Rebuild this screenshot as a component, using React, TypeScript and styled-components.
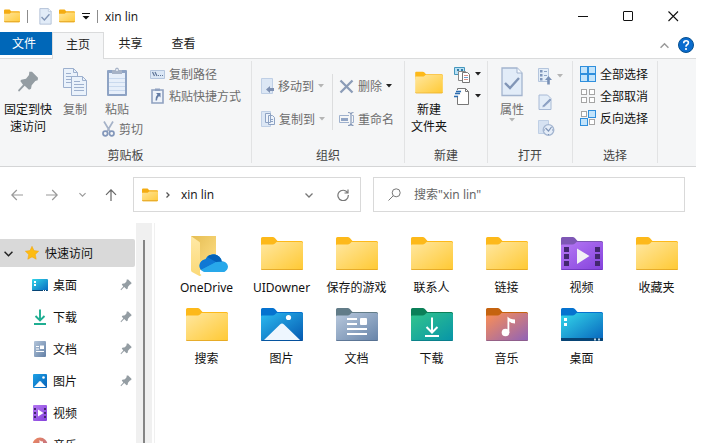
import React from 'react';
import styled, { createGlobalStyle } from 'styled-components';

const GlobalStyle = createGlobalStyle`
  * { box-sizing: border-box; }
  body {
    margin: 0;
    background: #fff;
    overflow: hidden;
  }
  body, button, input {
    font-family: 'Noto Sans', 'Noto Sans CJK SC', sans-serif;
    font-size: 12px;
    line-height: 17px;
    color: #111;
  }
  button {
    margin: 0;
    padding: 0;
    border: 0;
    background: transparent;
    text-align: center;
    white-space: nowrap;
  }
  svg { display: block; flex: none; }
`;

/* ---------- Window frame ---------- */

const Page = styled.div`
  height: 100vh;
  padding-right: 5px;
  background: #fff;
`;

const Window = styled.div`
  height: 100%;
  display: flex;
  flex-direction: column;
  overflow: hidden;
  background: #fff;
`;

const TitleBar = styled.header`
  flex: none;
  height: 32px;
  display: flex;
  align-items: center;
  padding-left: 4px;
`;

const TitleTools = styled.div`
  display: flex;
  align-items: center;
  gap: 7px;
`;

const TitleDivider = styled.span<{ $after?: number }>`
  width: 1px;
  height: 13px;
  margin-right: ${(p) => p.$after ?? 0}px;
  background: #8c8c8c;
`;

const WindowTitle = styled.h1`
  margin: 0;
  font-size: 12px;
  font-weight: 400;
  font-family: 'Open Sans', 'Noto Sans CJK SC', sans-serif;
`;

const WindowControls = styled.div`
  display: flex;
  margin-left: auto;
`;

const WindowButton = styled.button`
  width: 45px;
  height: 32px;
  display: grid;
  place-items: center;
`;

/* ---------- Ribbon ---------- */

const TabRow = styled.nav`
  flex: none;
  height: 27px;
  display: flex;
  align-items: flex-start;
  box-shadow: inset 0 -1px #dadbdc;
`;

const Tab = styled.button<{ $kind?: 'file' | 'active' }>`
  width: ${(p) => (p.$kind ? 52 : 53)}px;
  height: ${(p) => (p.$kind === 'active' ? 27 : 23)}px;
  padding-right: ${(p) => (p.$kind === 'file' ? 4 : 0)}px;
  padding-bottom: ${(p) => (p.$kind === 'active' ? 3 : 0)}px;
  color: ${(p) => (p.$kind === 'file' ? '#fff' : '#222')};
  background: ${(p) =>
    p.$kind === 'file' ? '#0067b8' : p.$kind === 'active' ? '#f5f6f7' : 'transparent'};
  border: ${(p) => (p.$kind === 'active' ? '1px solid #dadbdc' : '0')};
  border-bottom: 0;
`;

const TabRowEnd = styled.div`
  display: flex;
  align-items: center;
  gap: 9px;
  height: 26px;
  margin-left: auto;
  padding-right: 2px;
`;

const Ribbon = styled.section`
  flex: none;
  display: flex;
  height: 108px;
  padding: 2px 0 3px;
  background: #f5f6f7;
  border-bottom: 1px solid #d4d5d6;
`;

const RibbonGroup = styled.section<{ $width: number }>`
  flex: none;
  width: ${(p) => p.$width}px;
  display: flex;
  flex-direction: column;
  border-right: 1px solid #e2e3e4;
`;

const GroupBody = styled.div<{ $left: number; $gap?: number }>`
  flex: 1;
  display: flex;
  align-items: flex-start;
  gap: ${(p) => p.$gap ?? 0}px;
  padding: 2px 0 0 ${(p) => p.$left}px;
`;

const GroupName = styled.h2`
  margin: 0;
  font-size: 12px;
  line-height: 15px;
  font-weight: 400;
  text-align: center;
  color: #444;
`;

const LargeButton = styled.button<{ $width: number; $muted?: boolean }>`
  width: ${(p) => p.$width}px;
  display: flex;
  flex-direction: column;
  align-items: center;
  color: ${(p) => (p.$muted ? '#6d6d6d' : '#111')};
`;

const LargeIcon = styled.span`
  height: 38px;
  display: grid;
  place-items: center;
`;

const Column = styled.div<{ $top?: number; $gap?: number }>`
  display: flex;
  flex-direction: column;
  align-items: flex-start;
  gap: ${(p) => p.$gap ?? 0}px;
  padding-top: ${(p) => p.$top ?? 0}px;
`;

const SmallButton = styled.button<{ $muted?: boolean; $indent?: number }>`
  height: 22px;
  display: flex;
  align-items: center;
  gap: 4px;
  margin-left: ${(p) => p.$indent ?? 0}px;
  color: ${(p) => (p.$muted ? '#6d6d6d' : '#111')};
`;

const ColumnDivider = styled.span`
  width: 1px;
  height: 56px;
  margin: 11px 6px 0 7px;
  background: #dcddde;
`;

/* ---------- Navigation ---------- */

const NavBar = styled.nav`
  flex: none;
  height: 56px;
  display: flex;
  align-items: center;
  padding: 0 11px 1px 0;
`;

const NavButtons = styled.div`
  flex: none;
  width: 133px;
  display: flex;
  align-items: center;
  padding-left: 2px;
`;

const NavButton = styled.button<{ $width: number }>`
  width: ${(p) => p.$width}px;
  height: 28px;
  display: grid;
  place-items: center;
`;

const AddressBar = styled.div`
  flex: 228 1 228px;
  min-width: 0;
  height: 35px;
  display: flex;
  align-items: center;
  gap: 6px;
  padding: 0 3px 0 8px;
  border: 1px solid #d9d9d9;
`;

const Crumb = styled.button`
  flex: 1;
  padding-left: 3px;
  text-align: left;
  font-family: 'Open Sans', 'Noto Sans CJK SC', sans-serif;
`;

const AddressActions = styled.div`
  display: flex;
`;

const SearchBox = styled.label`
  flex: 312 1 312px;
  min-width: 0;
  height: 35px;
  display: flex;
  align-items: center;
  gap: 13px;
  margin-left: 12px;
  padding-left: 14px;
  border: 1px solid #d9d9d9;
`;

const SearchInput = styled.input`
  flex: 1;
  min-width: 0;
  padding: 0;
  border: 0;
  outline: 0;
  background: transparent;
  &::placeholder { color: #666; opacity: 1; }
`;

/* ---------- Body ---------- */

const Body = styled.div`
  flex: 1;
  min-height: 0;
  display: flex;
`;

const Sidebar = styled.aside`
  flex: none;
  width: 136px;
  padding: 16px 1px 0 0;
  overflow: hidden;
`;

const TreeHead = styled.button`
  width: 100%;
  height: 28px;
  display: flex;
  align-items: center;
  margin-bottom: 2px;
  padding-left: 4px;
  background: #d9d9d9;
  border-radius: 0 2px 2px 0;
`;

const TreeHeadIcon = styled.span`
  margin: 0 6px 0 12px;
`;

const TreeRow = styled.button`
  width: 100%;
  height: 32px;
  display: flex;
  align-items: center;
  gap: 5px;
  padding: 0 3px 0 32px;
`;

const TreeName = styled.span`
  flex: 1;
  text-align: left;
`;

const ScrollTrack = styled.div`
  flex: none;
  width: 16px;
  display: flex;
  justify-content: center;
  padding-top: 17px;
  background: #f0f0f0;
`;

const ScrollThumb = styled.div`
  width: 2px;
  background: #858585;
`;

const Files = styled.main`
  flex: 1;
  min-width: 0;
  display: grid;
  grid-template-columns: repeat(auto-fill, 75px);
  grid-auto-rows: 60px;
  align-content: start;
  row-gap: 11px;
  margin-left: 2px;
  padding: 13px 0 0 14px;
  border-left: 1px solid #f0f0f0;
`;

const FileItem = styled.button`
  display: flex;
  flex-direction: column;
  align-items: center;
`;

const FileIcon = styled.span`
  height: 43px;
`;

/* ---------- Icons ---------- */

const Caret = ({ color = '#222' }: { color?: string }) => (
  <svg width="6" height="4" viewBox="0 0 6 4"><path d="M0 0h6L3 3.5z" fill={color} /></svg>
);

const Pin = ({ size }: { size: number }) => (
  <svg width={size} height={size} viewBox="0 0 22 22">
    <path d="M12.3.7H15l6 6-.3 2.6-2.4.7-3.6 4.3-.7 3.4-2 1-4.3-4L2 20.7l-1-1.4 5-5.6L3.3 10l1-1.3 4.7-1L12 4z" fill="#949da3" />
  </svg>
);

const Chevron = ({ dir, color = '#777', size = 8 }: { dir: 'up' | 'down' | 'right'; color?: string; size?: number }) => (
  <svg width={size} height={size} viewBox="0 0 8 8" fill="none" stroke={color} strokeWidth="1.3">
    <path d={{ up: 'M.5 6 4 2.5 7.5 6', down: 'M.5 2.5 4 6l3.5-3.5', right: 'M2.5 1.500 5 4 2.5 6.500' }[dir]} />
  </svg>
);

const MiniFolder = () => (
  <svg width="16" height="14" viewBox="0 0 16 14">
    <defs>
      <linearGradient id="mini" x1="0" y1="0" x2="1" y2="1"><stop stopColor="#ffe59a" /><stop offset="1" stopColor="#ffca3a" /></linearGradient>
    </defs>
    <path d="M0 1.5Q0 .5 1 .5h4.6l1.6 1.7H15q1 0 1 1V8H0z" fill="#f4ac12" />
    <path d="M0 4.8h5.6l1.6-1.3H16v8.7q0 1-1 1H1q-1 0-1-1z" fill="url(#mini)" />
    <path d="M0 12.3q.2.9 1 .9h14q.8 0 1-.9z" fill="#e3a320" />
  </svg>
);

const CheckedPage = ({ w, h }: { w: number; h: number }) => (
  <svg width={w} height={h} viewBox="0 0 22 30">
    <path d="M1 1h15l5 5v22.500H1z" fill="#e2ecf8" stroke="#a3b4ce" strokeWidth="1.3" />
    <path d="M16 1v5h5" fill="#f5f9fe" stroke="#a3b4ce" />
    <path d="m4 16 5 5 9-10" fill="none" stroke="#8195b6" strokeWidth="2.4" />
  </svg>
);

const CopyPages = () => (
  <svg width="26" height="30" viewBox="0 0 26 30" stroke="#9db0ce">
    <path d="M1.500 1.500h10l4 4v15h-14z" fill="#eaf2fb" />
    <path d="M11.500 1.500v4h4M4 6.500h5M4 9.500h8M4 12.500h8M4 15.500h8" fill="none" />
    <path d="M9.500 9.500h11l4 4v15h-15z" fill="#eaf2fb" />
    <path d="M20.500 9.500v4h4M12 14.500h6M12 17.500h10M12 20.500h10M12 23.500h10" fill="none" />
  </svg>
);

const Clipboard = () => (
  <svg width="22" height="30" viewBox="0 0 22 30">
    <rect x="1" y="3" width="20" height="26" rx="1" fill="#8ea3c4" />
    <path d="M3 6h16v21H3z" fill="#e7effa" />
    <path d="M3 11.500h16M3 15.500h16M3 19.500h16M3 23.500h16" stroke="#c9d9ee" />
    <path d="M6 3h3q0-2.500 2-2.500T13 3h3v4H6z" fill="#a7b3c7" />
    <circle cx="11" cy="3" r="1" fill="#eef3fa" />
  </svg>
);

const Scissors = () => (
  <svg width="13" height="16" viewBox="0 0 13 16" fill="none">
    <path d="m2 .5 6 10M11 .5l-6 10" stroke="#a5b2c8" strokeWidth="1.700" />
    <ellipse cx="3.300" cy="12.500" rx="2.300" ry="2.300" stroke="#8397ba" strokeWidth="1.700" />
    <ellipse cx="9.700" cy="12.500" rx="2.300" ry="2.300" stroke="#8397ba" strokeWidth="1.700" />
  </svg>
);

const PathIcon = () => (
  <svg width="15" height="16" viewBox="0 0 15 16">
    <path d="M.5 4.500h14v8H.5z" fill="#dbe7f5" stroke="#b4c5dd" />
    <path d="m2.500 6 2 4M5 6l2 4M8 9.500h1M10 9.500h1M12 9.500h1" stroke="#5f7598" strokeWidth="1.200" />
  </svg>
);

const ShortcutIcon = () => (
  <svg width="15" height="16" viewBox="0 0 15 16">
    <path d="M2 2h11v13H2z" fill="#eef3fa" stroke="#8fa1c0" strokeWidth="1.600" />
    <path d="M5 .5h5V3H5z" fill="#8fa1c0" />
    <path d="M6 5h4.500v4.500L9 8q-2 1.500-2 4.500H5.500Q5 9 7.500 6.500z" fill="#647ca4" />
  </svg>
);

const MoveIcon = () => (
  <svg width="13" height="16" viewBox="0 0 13 16">
    <path d="M.5.500h11v15H.5z" fill="#dce7f5" stroke="#bfcfe5" />
    <path d="M5 11.500 9 8v2h4v3H9v2z" fill="#7d90b2" />
  </svg>
);

const CopyToIcon = () => (
  <svg width="14" height="16" viewBox="0 0 14 16">
    <path d="M.5.500h9v15h-9z" fill="#dce7f5" stroke="#bfcfe5" />
    <path d="M4.500 2.500h5v9h-5zM7.500 4.500h4l2 2v7h-6z" fill="#edf3fb" stroke="#8da2c3" />
    <path d="M9 8.500h3M9 10.500h3" stroke="#8da2c3" />
  </svg>
);

const DeleteIcon = () => (
  <svg width="15" height="15" viewBox="0 0 15 15"><path d="m1.500 1.500 12 12M13.500 1.500l-12 12" stroke="#8b9cb7" strokeWidth="2.300" /></svg>
);

const RenameIcon = () => (
  <svg width="15" height="16" viewBox="0 0 15 16" fill="none">
    <path d="M10 4.500H.5v7H10M13 4.500h1.500v7H13" stroke="#9fb1cd" />
    <path d="M2 7h7v3H2z" fill="#91a5c5" />
    <path d="M9 1.500q3 0 3 2 0-2 2.500-2M9 14.500q3 0 3-2 0 2 2.500 2M12 3v10" stroke="#8598b8" strokeWidth="1.200" />
  </svg>
);

const NewItemIcon = () => (
  <svg width="17" height="17" viewBox="0 0 17 17">
    <path d="M.5 1.500h10v7H.5z" fill="#b9e1f5" stroke="#4597bd" />
    <path d="M3 3h2v2H3zM7 3h2v2H7z" fill="#347ba5" />
    <path d="M4.500 5.500h7v9h-7z" fill="#fff" stroke="#888" />
    <path d="M8.500 6.500h5l2 2v8h-7z" fill="#fff" stroke="#777" />
    <path d="M10 9.500h4M10 13.500h4" stroke="#d78d86" /><path d="M10 11.500h4" stroke="#6d9ccb" />
  </svg>
);

const EasyAccessIcon = () => (
  <svg width="17" height="17" viewBox="0 0 17 17">
    <path d="M3.500.500h8l3 3v13h-11z" fill="#fff" stroke="#777" />
    <path d="M11.500.500v3h3" fill="none" stroke="#777" />
    <path d="M1.500 3.500h6M.5 5.500h6M0 7.500h5" stroke="#f5f6f7" strokeWidth="3" />
    <path d="M2 3.500h5M1 5.500h5M0 8.500h4" stroke="#2b6cb0" strokeWidth="1.300" />
  </svg>
);

const OpenIcon = () => (
  <svg width="15" height="17" viewBox="0 0 15 17">
    <path d="M.5.500h10v13H.5z" fill="#e3edf8" stroke="#b4c5dd" />
    <path d="M2 2h2.500v2.500H2zM2 6h2.500v2.500H2zM2 10h2.500v2.500H2z" fill="#7f96ba" />
    <path d="M6 3.500h3M6 7.500h3" stroke="#8ea4c5" />
    <path d="M10.500 8 14 12h-2.200v4.500H9.200V12H7z" fill="#7890b5" />
  </svg>
);

const EditIcon = () => (
  <svg width="15" height="17" viewBox="0 0 15 17">
    <path d="M1 1h8.500L13 4.500v11H1z" fill="#e3edf8" stroke="#a8bad5" />
    <path d="m4 13.500.5-2L12 4l2 2-7.500 7z" fill="#8da2c4" stroke="#eef4fb" strokeWidth=".5" />
  </svg>
);

const HistoryIcon = () => (
  <svg width="17" height="16" viewBox="0 0 17 16">
    <path d="M.5.500h10v13h-10z" fill="#d6e2f2" stroke="#bfcfe5" />
    <circle cx="10.500" cy="10" r="5.300" fill="#e5edf8" stroke="#a3b5d0" strokeWidth="1.300" />
    <path d="m7.500 8 3 3 3-4M6 10h1M14 10h1M10.500 14v1" fill="none" stroke="#7f95b8" strokeWidth="1.200" />
  </svg>
);

const SelectIcon = ({ on }: { on: boolean[] }) => (
  <svg width="16" height="16" viewBox="0 0 16 16">
    {[0, 1, 2, 3].map((i) => (
      <rect
        key={i}
        x={(i % 2) * 8 + (on[i] ? 0.5 : 1.5)}
        y={Math.floor(i / 2) * 8 + (on[i] ? 0.5 : 1.5)}
        width={on[i] ? 7 : 5}
        height={on[i] ? 7 : 5}
        fill={on[i] ? '#c3e4fb' : '#fff'}
        stroke={on[i] ? '#2f8fdd' : '#a5a5a5'}
      />
    ))}
  </svg>
);

type Kind = 'plain' | 'pictures' | 'documents' | 'downloads' | 'music' | 'videos' | 'desktop';

const folderColors: Record<Kind, [string, string, string, string]> = {
  plain: ['#fdb91a', '#ffe7a0', '#ffc933', '#e0a01c'],
  pictures: ['#0572cf', '#2cbaf0', '#0458b0', '#034a94'],
  documents: ['#627c88', '#b9c9dd', '#6683a8', '#526b8b'],
  downloads: ['#0b8058', '#32c58c', '#0794a8', '#087784'],
  music: ['#c5630f', '#fd9053', '#8e62b9', '#8a5b83'],
  videos: ['#7e57b5', '#b77af5', '#8341dc', '#6a31b6'],
  desktop: ['#0572cf', '#35d8ea', '#0663bd', '#073e68'],
};

const folderArt: Record<Kind, React.ReactNode> = {
  plain: null,
  pictures: (
    <>
      <path d="M3 32 19 16.500q2-2 4 0L39 32z" fill="#eef6fe" />
      <circle cx="27.500" cy="9.500" r="2.600" fill="#fff" />
    </>
  ),
  documents: (
    <>
      <path d="M11 11h10M11 16h10M11 21h20M11 26h20" stroke="#fff" strokeWidth="2" />
      <rect x="24" y="10" width="7" height="7" rx="1" fill="#fff" />
    </>
  ),
  downloads: (
    <path d="M21 9.500v15M15.500 19l5.500 5.500 5.500-5.500M14 28h14" fill="none" stroke="#fff" strokeWidth="2" />
  ),
  music: (
    <>
      <circle cx="19.500" cy="24.500" r="3.800" fill="#fff" />
      <path d="M21.500 25V8.500q1.500 2.500 7.500 3v4q-4 0-5.700-2V25z" fill="#fff" />
    </>
  ),
  videos: (
    <>
      <path d="M16 11.500 28.500 19 16 27z" fill="#f2f0f5" />
      <path d="M3 10h5v5H3zM3 17h5v5H3zM3 24h5v5H3zM34 10h5v5h-5zM34 17h5v5h-5zM34 24h5v5h-5z" fill="#43276f" />
    </>
  ),
  desktop: (
    <>
      <path d="M0 30h42v1.500q0 1.500-1.500 1.500h-39Q0 33 0 31.500z" fill="#074475" />
      <path d="M3 10h3v3H3zM3 15h3v3H3z" fill="#fff" />
      <path d="M33 30.500h2v2h-2zM37 30.500h2v2h-2z" fill="#bdd5e8" />
    </>
  ),
};

const Folder = ({ kind = 'plain', width = 42, height = 35 }: { kind?: Kind; width?: number; height?: number }) => {
  const [tab, from, to, edge] = folderColors[kind];
  const id = `folder-${kind}`;
  return (
    <svg width={width} height={height} viewBox="0 -1 42 35">
      <defs>
        <linearGradient id={id} x1="0" y1="0" x2="1" y2="1">
          <stop stopColor={from} /><stop offset="1" stopColor={to} />
        </linearGradient>
      </defs>
      <path d="M0 1.500Q0 0 1.500 0h10q1.500 0 2.600 1.200L16.500 4h24Q42 4 42 5.500V12H0z" fill={tab} />
      <path d="M0 8.500Q0 7.500 1 7.500h10.500q1.500 0 2.500-1L15.500 5h25Q42 5 42 6.500v25q0 1.500-1.500 1.500h-39Q0 33 0 31.500z" fill={`url(#${id})`} />
      <path d="M0 31.500Q0 33 1.500 33h39q1.500 0 1.500-1.500-.5.700-1.500.700h-39Q.5 32.200 0 31.500z" fill={edge} />
      {folderArt[kind]}
    </svg>
  );
};

const OneDriveIcon = () => (
  <svg width="44" height="42" viewBox="-6 0 44 42">
    <defs>
      <linearGradient id="od-back" x1="0" y1="0" x2="1" y2="1"><stop stopColor="#e5bd53" /><stop offset="1" stopColor="#ffe087" /></linearGradient>
      <linearGradient id="od-front" x1="0" y1="0" x2="0" y2="1"><stop stopColor="#ffe9a6" /><stop offset="1" stopColor="#fbd978" /></linearGradient>
      <clipPath id="od-cloud"><path d="M14 36a6 6 0 0 1-5.500-6 6.500 6.500 0 0 1 6-6.800 8.700 8.700 0 0 1 16.300 2.300A5.300 5.300 0 0 1 32.500 36z" /></clipPath>
    </defs>
    <path d="M0 0h25v34H0z" fill="url(#od-back)" />
    <path d="M0 0 8.500 6q.5.400.5 1v31l1.500 1q-1.500 1.500-3 .5L1 36q-1-.6-1-2z" fill="url(#od-front)" />
    <g clipPath="url(#od-cloud)">
      <path d="M7 15h32v22H7z" fill="#28a8ea" />
      <path d="M7 15h18l1 11-18 9z" fill="#0f78d4" />
      <path d="M14.500 20V15h18v10.500l-7.500.500z" fill="#0462b8" />
      <path d="M8 35 25 26l9 8v3H8z" fill="#28a8ea" />
    </g>
  </svg>
);

const Frame16 = ({ children }: { children: React.ReactNode }) => (
  <svg width="16" height="16" viewBox="0 0 16 16">{children}</svg>
);

const Gradient = ({ id, from, to }: { id: string; from: string; to: string }) => (
  <defs>
    <linearGradient id={id} x1="0" y1="0" x2="1" y2="1"><stop stopColor={from} /><stop offset="1" stopColor={to} /></linearGradient>
  </defs>
);

const SideDesktop = () => (
  <Frame16>
    <Gradient id="s-desk" from="#31d6e8" to="#0767c0" />
    <rect y="2" width="16" height="12" rx="1" fill="url(#s-desk)" />
    <path d="M0 13h16q0 1-1 1H1q-1 0-1-1z" fill="#074475" />
    <path d="M2 4h2v2H2zM2 7h2v2H2zM11 13h1v1h-1zM13 13h1v1h-1z" fill="#fff" />
  </Frame16>
);

const SideDownload = () => (
  <Frame16>
    <path d="M8 .5v10.500M3.500 7 8 11.500 12.500 7M2 15h12" fill="none" stroke="#1fae92" strokeWidth="1.900" />
  </Frame16>
);

const SideDocument = () => (
  <Frame16>
    <Gradient id="s-doc" from="#b3c5da" to="#627fa5" />
    <rect x="2" width="12" height="16" rx="1" fill="url(#s-doc)" />
    <path d="M4 5.500h3M4 8h3M4 10.500h8" stroke="#fff" strokeWidth="1.200" />
    <path d="M8 4.500h4V8H8z" fill="#fff" />
  </Frame16>
);

const SidePicture = () => (
  <Frame16>
    <Gradient id="s-pic" from="#1ea2e6" to="#0560b8" />
    <rect x="1" y="1" width="14" height="14" rx="1" fill="url(#s-pic)" />
    <path d="m2 14 5.200-5.500q.8-.8 1.600 0L14 14z" fill="#fff" />
    <circle cx="11.500" cy="4.500" r="1.300" fill="#fff" />
  </Frame16>
);

const SideVideo = () => (
  <Frame16>
    <Gradient id="s-vid" from="#b578f2" to="#8340da" />
    <rect x="1" width="14" height="16" rx="1" fill="url(#s-vid)" />
    <path d="M2 3h2v2H2zM2 7h2v2H2zM2 11h2v2H2zM12 3h2v2h-2zM12 7h2v2h-2zM12 11h2v2h-2z" fill="#43276f" />
    <path d="M6 4.500 11.500 8 6 11.500z" fill="#fff" />
  </Frame16>
);

const SideMusic = () => (
  <Frame16>
    <Gradient id="s-mus" from="#f18a5b" to="#b0668f" />
    <circle cx="8" cy="8" r="7.500" fill="url(#s-mus)" />
    <path d="M7.500 10.500V3q1 1.500 3.500 1.500v2q-1.500 0-2.300-.8v5z" fill="#fff" />
    <circle cx="6.800" cy="10.700" r="2" fill="#fff" />
  </Frame16>
);

const Star = () => (
  <svg width="14" height="14" viewBox="0 0 14 14">
    <path d="m7 .3 2 4.300 4.700.6-3.400 3.200.9 4.800L7 10.900l-4.200 2.300.9-4.800L.3 5.200 5 4.600z" fill="#fdbc13" stroke="#f2a50c" strokeWidth=".5" />
  </svg>
);

const Arrow = ({ dir, color }: { dir: 'left' | 'right' | 'up'; color: string }) => (
  <svg width="12" height="12" viewBox="0 0 12 12" fill="none" stroke={color} strokeWidth="1.200">
    <path d={{ left: 'M12 6H.8M5.800 1l-5 5 5 5', right: 'M0 6h11.200M6.200 1l5 5-5 5', up: 'M6 12V.8M1 5.800l5-5 5 5' }[dir]} />
  </svg>
);

/* ---------- Content ---------- */

const treeItems: { name: string; icon: React.ReactNode; pinned: boolean }[] = [
  { name: '桌面', icon: <SideDesktop />, pinned: true },
  { name: '下载', icon: <SideDownload />, pinned: true },
  { name: '文档', icon: <SideDocument />, pinned: true },
  { name: '图片', icon: <SidePicture />, pinned: true },
  { name: '视频', icon: <SideVideo />, pinned: false },
  { name: '音乐', icon: <SideMusic />, pinned: false },
];

const files: { name: string; kind: Kind | 'onedrive' }[] = [
  { name: 'OneDrive', kind: 'onedrive' },
  { name: 'UIDowner', kind: 'plain' },
  { name: '保存的游戏', kind: 'plain' },
  { name: '联系人', kind: 'plain' },
  { name: '链接', kind: 'plain' },
  { name: '视频', kind: 'videos' },
  { name: '收藏夹', kind: 'plain' },
  { name: '搜索', kind: 'plain' },
  { name: '图片', kind: 'pictures' },
  { name: '文档', kind: 'documents' },
  { name: '下载', kind: 'downloads' },
  { name: '音乐', kind: 'music' },
  { name: '桌面', kind: 'desktop' },
];

const faded = '#b5b5b5';

export default function App() {
  return (
    <Page>
      <GlobalStyle />
      <Window>
        <TitleBar>
          <TitleTools>
            <MiniFolder />
            <TitleDivider $after={4} />
            <button aria-label="属性"><CheckedPage w={13} h={17} /></button>
            <button aria-label="新建文件夹"><MiniFolder /></button>
            <button aria-label="自定义快速访问工具栏">
              <svg width="8" height="7" viewBox="0 0 8 7"><path d="M0 .5h8" stroke="#111" /><path d="M.5 3h7L4 6.500z" fill="#111" /></svg>
            </button>
            <TitleDivider />
            <WindowTitle>xin lin</WindowTitle>
          </TitleTools>
          <WindowControls>
            <WindowButton aria-label="最小化">
              <svg width="11" height="11" viewBox="0 0 11 11"><path d="M0 5.500h10" stroke="#111" /></svg>
            </WindowButton>
            <WindowButton aria-label="最大化">
              <svg width="11" height="11" viewBox="0 0 11 11"><rect x=".5" y=".5" width="9" height="9" rx=".5" fill="none" stroke="#111" /></svg>
            </WindowButton>
            <WindowButton aria-label="关闭">
              <svg width="11" height="11" viewBox="0 0 11 11"><path d="m.5.500 9.500 9.500M10 .5.500 10" stroke="#111" strokeWidth="1.100" /></svg>
            </WindowButton>
          </WindowControls>
        </TitleBar>

        <TabRow>
          <Tab $kind="file">文件</Tab>
          <Tab $kind="active">主页</Tab>
          <Tab>共享</Tab>
          <Tab>查看</Tab>
          <TabRowEnd>
            <button aria-label="折叠功能区"><Chevron dir="up" color="#999" size={9} /></button>
            <button aria-label="帮助">
              <svg width="16" height="16" viewBox="0 0 16 16">
                <circle cx="8" cy="8" r="7.500" fill="#0a6cce" stroke="#07508f" />
                <path d="M5.700 6.200q0-2.400 2.400-2.400 2.300 0 2.300 2 0 1.200-1.300 2Q8 8.500 8 9.700" fill="none" stroke="#fff" strokeWidth="1.600" />
                <circle cx="8" cy="12" r="1.100" fill="#fff" />
              </svg>
            </button>
          </TabRowEnd>
        </TabRow>

        <Ribbon>
          <RibbonGroup $width={252}>
            <GroupBody $left={2}>
              <LargeButton $width={52}>
                <LargeIcon><Pin size={22} /></LargeIcon>
                <span>固定到快</span>
                <span>速访问</span>
              </LargeButton>
              <LargeButton $width={42} $muted>
                <LargeIcon><CopyPages /></LargeIcon>
                <span>复制</span>
              </LargeButton>
              <Column>
                <LargeButton $width={42} $muted>
                  <LargeIcon><Clipboard /></LargeIcon>
                  <span>粘贴</span>
                </LargeButton>
                <SmallButton $muted $indent={6}><Scissors />剪切</SmallButton>
              </Column>
              <Column>
                <SmallButton $muted $indent={7}><PathIcon />复制路径</SmallButton>
                <SmallButton $muted $indent={7}><ShortcutIcon />粘贴快捷方式</SmallButton>
              </Column>
            </GroupBody>
            <GroupName>剪贴板</GroupName>
          </RibbonGroup>

          <RibbonGroup $width={153}>
            <GroupBody $left={9}>
              <Column $top={12} $gap={11}>
                <SmallButton $muted><MoveIcon />移动到<Caret color={faded} /></SmallButton>
                <SmallButton $muted><CopyToIcon />复制到<Caret color={faded} /></SmallButton>
              </Column>
              <ColumnDivider />
              <Column $top={12} $gap={11}>
                <SmallButton $muted><DeleteIcon />删除<Caret /></SmallButton>
                <SmallButton $muted><RenameIcon />重命名</SmallButton>
              </Column>
            </GroupBody>
            <GroupName>组织</GroupName>
          </RibbonGroup>

          <RibbonGroup $width={83}>
            <GroupBody $left={3} $gap={4}>
              <LargeButton $width={42}>
                <LargeIcon><Folder width={28} height={23} /></LargeIcon>
                <span>新建</span>
                <span>文件夹</span>
              </LargeButton>
              <Column>
                <SmallButton aria-label="新建项目"><NewItemIcon /><Caret /></SmallButton>
                <SmallButton aria-label="轻松访问"><EasyAccessIcon /><Caret /></SmallButton>
              </Column>
            </GroupBody>
            <GroupName>新建</GroupName>
          </RibbonGroup>

          <RibbonGroup $width={85}>
            <GroupBody $left={3} $gap={5}>
              <LargeButton $width={42} $muted>
                <LargeIcon><CheckedPage w={22} h={30} /></LargeIcon>
                <span>属性</span>
                <Caret color={faded} />
              </LargeButton>
              <Column $top={2} $gap={4}>
                <SmallButton aria-label="打开"><OpenIcon /><Caret color={faded} /></SmallButton>
                <SmallButton aria-label="编辑"><EditIcon /></SmallButton>
                <SmallButton aria-label="历史记录"><HistoryIcon /></SmallButton>
              </Column>
            </GroupBody>
            <GroupName>打开</GroupName>
          </RibbonGroup>

          <RibbonGroup $width={85}>
            <GroupBody $left={7}>
              <Column>
                <SmallButton><SelectIcon on={[true, true, true, true]} />全部选择</SmallButton>
                <SmallButton><SelectIcon on={[false, false, false, false]} />全部取消</SmallButton>
                <SmallButton><SelectIcon on={[false, true, true, false]} />反向选择</SmallButton>
              </Column>
            </GroupBody>
            <GroupName>选择</GroupName>
          </RibbonGroup>
        </Ribbon>

        <NavBar>
          <NavButtons>
            <NavButton $width={30} aria-label="后退"><Arrow dir="left" color="#999" /></NavButton>
            <NavButton $width={40} aria-label="前进"><Arrow dir="right" color="#999" /></NavButton>
            <NavButton $width={21} aria-label="最近浏览的位置"><Chevron dir="down" color="#999" size={7} /></NavButton>
            <NavButton $width={36} aria-label="上移"><Arrow dir="up" color="#666" /></NavButton>
          </NavButtons>
          <AddressBar>
            <MiniFolder />
            <Chevron dir="right" color="#555" />
            <Crumb>xin lin</Crumb>
            <AddressActions>
              <NavButton $width={40} aria-label="以前的位置"><Chevron dir="down" /></NavButton>
              <NavButton $width={28} aria-label="刷新">
                <svg width="12" height="12" viewBox="0 0 12 12" fill="none" stroke="#777" strokeWidth="1.200">
                  <path d="M10.600 3.800A5.200 5.200 0 1 0 11.300 6M11 .5V4H7.500" />
                </svg>
              </NavButton>
            </AddressActions>
          </AddressBar>
          <SearchBox>
            <svg width="13" height="13" viewBox="0 0 13 13" fill="none" stroke="#777" strokeWidth="1">
              <circle cx="8.200" cy="4.800" r="4" /><path d="M5.300 7.700.5 12.500" />
            </svg>
            <SearchInput type="search" aria-label="搜索" placeholder={'搜索"xin lin"'} />
          </SearchBox>
        </NavBar>

        <Body>
          <Sidebar>
            <TreeHead>
              <Chevron dir="down" color="#222" size={9} />
              <TreeHeadIcon><Star /></TreeHeadIcon>
              快速访问
            </TreeHead>
            {treeItems.map((item) => (
              <TreeRow key={item.name}>
                {item.icon}
                <TreeName>{item.name}</TreeName>
                {item.pinned && <Pin size={12} />}
              </TreeRow>
            ))}
          </Sidebar>
          <ScrollTrack><ScrollThumb /></ScrollTrack>
          <Files>
            {files.map((f) => (
              <FileItem key={f.name}>
                <FileIcon>{f.kind === 'onedrive' ? <OneDriveIcon /> : <Folder kind={f.kind} />}</FileIcon>
                {f.name}
              </FileItem>
            ))}
          </Files>
        </Body>
      </Window>
    </Page>
  );
}
